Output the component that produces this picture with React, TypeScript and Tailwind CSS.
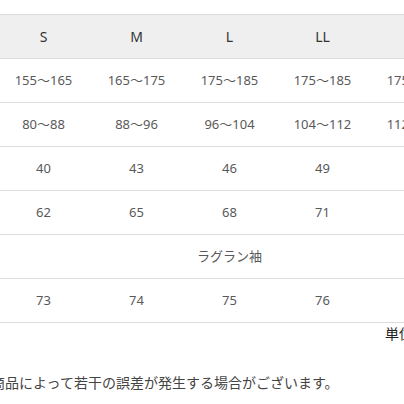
import React from "react";

const sizes = ["S", "M", "L", "LL", "3L"];
const rows: { label: string; cells: string[] | null; span?: string }[] = [
  { label: "身長", cells: ["155〜165", "165〜175", "175〜185", "175〜185", "175〜185"] },
  { label: "胸囲", cells: ["80〜88", "88〜96", "96〜104", "104〜112", "112〜120"] },
  { label: "身幅", cells: ["40", "43", "46", "49", "52"] },
  { label: "着丈", cells: ["62", "65", "68", "71", "74"] },
  { label: "袖", cells: null, span: "ラグラン袖" },
  { label: "袖丈", cells: ["73", "74", "75", "76", "77"] },
];

export default function App() {
  return (
    <div
      className="w-[404px] h-[404px] overflow-hidden bg-white"
      style={{ fontFamily: '"Noto Sans", "Noto Sans CJK JP", sans-serif' }}
    >
      <div className="pt-[14px] ml-[-103px] w-[565px]">
        <table className="table-fixed border-collapse w-[565px] text-[13px]">
          <colgroup>
            <col className="w-[100px]" />
            <col className="w-[93px]" />
            <col className="w-[93px]" />
            <col className="w-[93px]" />
            <col className="w-[93px]" />
            <col className="w-[93px]" />
          </colgroup>
          <thead>
            <tr className="h-[44px] bg-[#efefef] border-t border-b border-[#dcdcdc]">
              <th className="font-normal text-[14px] text-[#333]">サイズ</th>
              {sizes.map((s) => (
                <th key={s} className="font-normal text-[14px] text-[#333] text-center">
                  {s}
                </th>
              ))}
            </tr>
          </thead>
          <tbody>
            {rows.map((r) => (
              <tr key={r.label} className="h-[44px] border-b border-[#dcdcdc]">
                <td className="text-[#333] text-center">{r.label}</td>
                {r.cells ? (
                  r.cells.map((c, i) => (
                    <td key={i} className="text-center text-[#595959]">
                      {c}
                    </td>
                  ))
                ) : (
                  <td colSpan={5} className="text-center text-[#595959]">
                    {r.span}
                  </td>
                )}
              </tr>
            ))}
          </tbody>
        </table>
        <div className="pl-[488px] pt-[2px] text-[14px] leading-[18px] text-[#222] whitespace-nowrap">
          単位：cm
        </div>
      </div>
      <p className="ml-[-9px] mt-[30px] text-[14px] leading-[20px] text-[#444] whitespace-nowrap">
        商品によって若干の誤差が発生する場合がございます。
      </p>
    </div>
  );
}
